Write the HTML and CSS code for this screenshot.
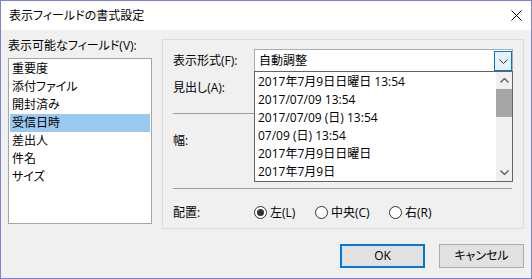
FILE: index.html
```html
<!DOCTYPE html>
<html lang="ja">
<head>
<meta charset="utf-8">
<title>表示フィールドの書式設定</title>
<link rel="stylesheet" href="styles.css">
</head>
<body>
<div class="window">
  <div class="titlebar">
    <span class="title">表示フィールドの書式設定</span>
    <svg class="close" width="11" height="11" viewBox="0 0 11 11"><path d="M0.5 0.5 L10.5 10.5 M10.5 0.5 L0.5 10.5" stroke="#000" stroke-width="1" fill="none"/></svg>
  </div>
  <div class="client">
    <div class="main">
      <div class="fields">
        <div class="label">表示可能なフィールド(V):</div>
        <ul class="listbox">
          <li>重要度</li>
          <li>添付ファイル</li>
          <li>開封済み</li>
          <li class="sel">受信日時</li>
          <li>差出人</li>
          <li>件名</li>
          <li>サイズ</li>
        </ul>
      </div>
      <div class="panel">
        <div class="row r1">
          <span class="lbl">表示形式(F):</span>
          <div class="combo">
            <span class="combo-text">自動調整</span>
            <span class="dd"><svg width="9" height="5" viewBox="0 0 9 5"><path d="M0.5 0.5 L4.5 4.5 L8.5 0.5" stroke="#333" stroke-width="1" fill="none"/></svg></span>
            <div class="droplist">
              <ul class="opts">
                <li>2017年7月9日日曜日 13:54</li>
                <li>2017/07/09 13:54</li>
                <li>2017/07/09 (日) 13:54</li>
                <li>07/09 (日) 13:54</li>
                <li>2017年7月9日日曜日</li>
                <li>2017年7月9日</li>
              </ul>
              <div class="vscroll">
                <span class="sbtn"><svg width="9" height="5" viewBox="0 0 9 5"><path d="M0.5 4.5 L4.5 0.5 L8.5 4.5" stroke="#606060" stroke-width="1.4" fill="none"/></svg></span>
                <span class="thumb"></span>
                <span class="sbtn down"><svg width="9" height="5" viewBox="0 0 9 5"><path d="M0.5 0.5 L4.5 4.5 L8.5 0.5" stroke="#606060" stroke-width="1.4" fill="none"/></svg></span>
              </div>
            </div>
          </div>
        </div>
        <div class="row r2"><span class="lbl">見出し(A):</span></div>
        <div class="sep s1"></div>
        <div class="row r3"><span class="lbl">幅:</span></div>
        <div class="sep s2"></div>
        <div class="row r4">
          <span class="lbl">配置:</span>
          <label class="radio w1"><span class="circle on"></span>左(L)</label>
          <label class="radio w2"><span class="circle"></span>中央(C)</label>
          <label class="radio"><span class="circle"></span>右(R)</label>
        </div>
      </div>
    </div>
    <div class="buttons">
      <button class="btn default">OK</button>
      <button class="btn">キャンセル</button>
    </div>
  </div>
</div>
</body>
</html>
```
FILE: styles.css
```css
* { box-sizing: border-box; }
html, body { margin: 0; padding: 0; background: #f0f0f0; }
body {
  font-family: "Open Sans", "Noto Sans CJK JP", sans-serif;
  font-size: 12px;
  line-height: 16px;
  color: #000;
  font-feature-settings: "palt";
}
.window {
  width: 532px;
  height: 279px;
  border: 1px solid #8080d6;
  display: flex;
  flex-direction: column;
  background: #f0f0f0;
}
.titlebar {
  height: 29px;
  background: #fff;
  display: flex;
  align-items: center;
  padding: 0 9px 0 8px;
}
.title { flex: 1; line-height: 29px; }
.close { display: block; }
.client {
  flex: 1;
  display: flex;
  flex-direction: column;
  padding: 8px 7px 0 7px;
}
.main { display: flex; align-items: flex-start; gap: 10px; }
.fields { width: 144px; }
.label { height: 16px; margin-bottom: 4px; white-space: nowrap; }
.listbox {
  list-style: none;
  margin: 0;
  padding: 1px;
  height: 166px;
  border: 1px solid #a5a5a5;
  background: #fff;
}
.listbox li { height: 18px; line-height: 18px; padding-left: 2px; }
.listbox li.sel { background: #99c9ef; }
.panel {
  width: 362px;
  height: 190px;
  margin-top: 1px;
  border: 1px solid #dcdcdc;
  padding: 9px 10px 0 10px;
  display: flex;
  flex-direction: column;
}
.row { display: flex; align-items: center; }
.lbl { width: 81px; flex: none; white-space: nowrap; }
.r1 { height: 23px; }
.r2 { height: 32px; }
.r3 { height: 54px; }
.r4 { height: 25px; margin-top: 11px; }
.sep { height: 1px; background: #a0a0a0; width: 339px; }
.s1 { margin-top: 9px; }
.s2 { margin-top: 20px; }
.combo {
  position: relative;
  width: 259px;
  height: 23px;
  border: 1px solid #adadad;
  background: #fff;
  display: flex;
  align-items: flex-start;
}
.combo-text { flex: 1; padding-left: 4px; line-height: 21px; font-feature-settings: normal; }
.dd {
  width: 18px;
  height: 20px;
  margin-top: 1px;
  border: 1px solid #0078d7;
  background: #e5f1fb;
  display: flex;
  align-items: center;
  justify-content: center;
}
.dd svg { display: block; }
.droplist {
  position: absolute;
  top: 100%;
  left: -1px;
  width: 259px;
  height: 111px;
  border: 1px solid #646464;
  background: #fff;
  display: flex;
  overflow: hidden;
  z-index: 2;
}
.opts {
  list-style: none;
  margin: 0;
  padding: 1px 0 0 3px;
  flex: 1;
  overflow: hidden;
  font-feature-settings: normal;
}
.opts li { height: 18px; line-height: 18px; white-space: nowrap; }
.vscroll {
  width: 16px;
  background: #f0f0f0;
  display: flex;
  flex-direction: column;
}
.sbtn {
  height: 17px;
  display: flex;
  align-items: center;
  justify-content: center;
}
.sbtn.down { margin-top: auto; }
.sbtn svg { display: block; }
.thumb { height: 28px; background: #a6a6a6; }
.radio { display: flex; align-items: center; gap: 3px; white-space: nowrap; }
.w1 { width: 61px; }
.w2 { width: 74px; }
.circle {
  width: 13px;
  height: 13px;
  border: 1px solid #333;
  border-radius: 50%;
  background: #fff;
  display: flex;
  align-items: center;
  justify-content: center;
}
.circle.on::after {
  content: "";
  width: 7px;
  height: 7px;
  border-radius: 50%;
  background: #333;
}
.buttons {
  display: flex;
  justify-content: flex-end;
  gap: 14px;
  margin-top: 15px;
}
.btn {
  width: 85px;
  height: 24px;
  font: inherit;
  font-feature-settings: "palt";
  background: #e1e1e1;
  border: 1px solid #adadad;
  padding: 0;
  color: #000;
}
.btn.default { border: 2px solid #0078d7; }
```
